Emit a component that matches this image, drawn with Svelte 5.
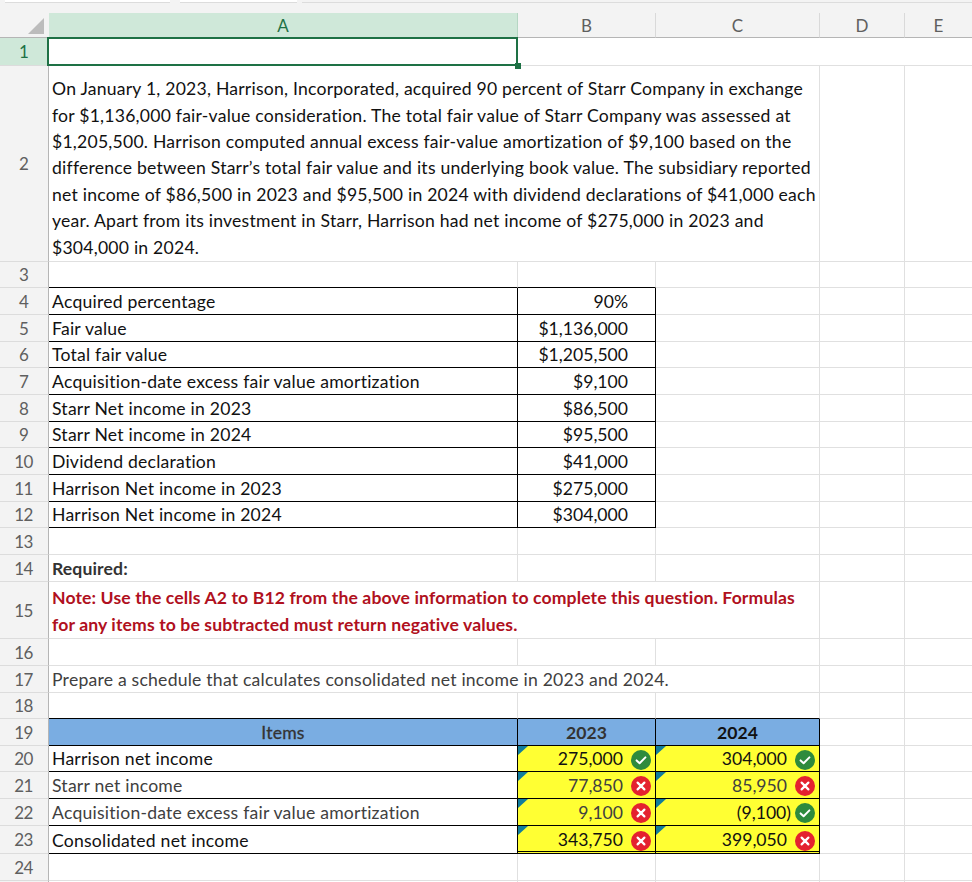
<script>
  const para = [
    'On January 1, 2023, Harrison, Incorporated, acquired 90 percent of Starr Company in exchange',
    'for $1,136,000 fair-value consideration. The total fair value of Starr Company was assessed at',
    '$1,205,500. Harrison computed annual excess fair-value amortization of $9,100 based on the',
    'difference between Starr’s total fair value and its underlying book value. The subsidiary reported',
    'net income of $86,500 in 2023 and $95,500 in 2024 with dividend declarations of $41,000 each',
    'year. Apart from its investment in Starr, Harrison had net income of $275,000 in 2023 and',
    '$304,000 in 2024.'
  ];
  const note = [
    'Note: Use the cells A2 to B12 from the above information to complete this question. Formulas',
    'for any items to be subtracted must return negative values.'
  ];
  const heights = [28,196,26,27,27,26,27,27,26,27,27,26,27,27,57,27,27,26,27,26,27,27,28,27];
  const info = {
    4:['Acquired percentage','90%'],5:['Fair value','$1,136,000'],6:['Total fair value','$1,205,500'],
    7:['Acquisition-date excess fair value amortization','$9,100'],8:['Starr Net income in 2023','$86,500'],
    9:['Starr Net income in 2024','$95,500'],10:['Dividend declaration','$41,000'],
    11:['Harrison Net income in 2023','$275,000'],12:['Harrison Net income in 2024','$304,000']
  };
  const sched = {
    20:{label:'Harrison net income',dark:true,b:['275,000',true,true],c:['304,000',true,true]},
    21:{label:'Starr net income',dark:false,b:['77,850',false,false],c:['85,950',false,false]},
    22:{label:'Acquisition-date excess fair value amortization',dark:false,b:['9,100',false,false],c:['(9,100)',true,true]},
    23:{label:'Consolidated net income',dark:true,b:['343,750',false,true],c:['399,050',false,true]}
  };
  const rowsTpl = '25px ' + heights.map(h => h + 'px').join(' ') + ' 2px';
</script>

<div class="page">
  <div class="tabs">
    <span class="tab t1"></span><span class="tab t2"></span><span class="tab t3"></span>
  </div>
  <div class="sheet" style:grid-template-rows={rowsTpl}>
    <div class="corner"><span class="tri"></span></div>
    <div class="col sel">A</div>
    <div class="col">B</div>
    <div class="col">C</div>
    <div class="col">D</div>
    <div class="col last">E</div>

    {#each heights as _, i}
      {@const n = i + 1}
      <div class="rh" class:rsel={n === 1}>{n}</div>

      {#if n === 1}
        <div class="cell a1 span3 noright"><span class="handle"></span></div>
        <div class="cell noright"></div>
        <div class="cell noright last"></div>
      {:else if n === 2}
        <div class="cell span3 txt">
          <p>{#each para as l}{l}<br />{/each}</p>
        </div>
        <div class="cell"></div>
        <div class="cell last"></div>
      {:else if n === 15}
        <div class="cell span3 txt note">
          <p>{#each note as l}{l}<br />{/each}</p>
        </div>
        <div class="cell"></div>
        <div class="cell last"></div>
      {:else if n === 17}
        <div class="cell span3 txt soft">Prepare a schedule that calculates consolidated net income in 2023 and 2024.</div>
        <div class="cell"></div>
        <div class="cell last"></div>
      {:else if info[n]}
        <div class="cell txt bk">{info[n][0]}</div>
        <div class="cell val bk">{info[n][1]}</div>
        <div class="cell"></div>
        <div class="cell"></div>
        <div class="cell last"></div>
      {:else if n === 19}
        <div class="cell head bk items">Items</div>
        <div class="cell head bk yr-soft">2023</div>
        <div class="cell head bk">2024</div>
        <div class="cell"></div>
        <div class="cell last"></div>
      {:else if sched[n]}
        {@const s = sched[n]}
        <div class="cell txt bk" class:soft={!s.dark}>{s.label}</div>
        {#each [s.b, s.c] as v}
          <div class="cell ans bk" class:dbl={n === 23} class:soft={!v[2]}>
            <span class="flag"></span>
            <span class="num" class:paren={v[0].startsWith('(')}>{v[0]}</span>
            {#if v[1]}
              <svg class="mark" viewBox="0 0 20 20"><circle cx="10" cy="10" r="10" fill="#2e8b3d"/><path d="M5.6 10.4l3 2.8 5.8-5.8" fill="none" stroke="#fff" stroke-width="2" stroke-linecap="round" stroke-linejoin="round"/></svg>
            {:else}
              <svg class="mark" viewBox="0 0 20 20"><circle cx="10" cy="10" r="10" fill="#e4222f"/><path d="M6.6 6.6l6.8 6.8M13.4 6.6l-6.8 6.8" fill="none" stroke="#fff" stroke-width="2.2" stroke-linecap="round"/></svg>
            {/if}
          </div>
        {/each}
        <div class="cell"></div>
        <div class="cell last"></div>
      {:else if n === 14}
        <div class="cell txt req">Required:</div>
        <div class="cell"></div>
        <div class="cell"></div>
        <div class="cell"></div>
        <div class="cell last"></div>
      {:else}
        <div class="cell" class:bb={n === 3 || n === 18}></div>
        <div class="cell" class:bb={n === 3 || n === 18}></div>
        <div class="cell" class:bb={n === 18}></div>
        <div class="cell"></div>
        <div class="cell last"></div>
      {/if}
    {/each}

    <div class="rh end"></div>
    <div class="cell end"></div>
    <div class="cell end"></div>
    <div class="cell end"></div>
    <div class="cell end"></div>
    <div class="cell end last"></div>
  </div>
</div>

<style>
  :global(body) { margin: 0; background: #fff; }
  .page {
    width: 972px;
    height: 882px;
    overflow: hidden;
    font-family: Lato, "Open Sans", sans-serif;
    font-size: 17.6px;
    letter-spacing: 0.22px;
    color: #111;
    background: #fff;
  }
  .tabs {
    height: 13px;
    box-sizing: border-box;
    background: #f3f3f3;
    display: flex;
    align-items: flex-start;
    padding-left: 5px;
    gap: 10px;
  }
  .tab { height: 3px; background: #fff; border-bottom: 1px solid #dcdcdc; box-sizing: border-box; }
  .t1 { width: 165px; }
  .t2 { width: 117px; }
  .t3 { flex: 1; margin-left: -5px; background: #f3f3f3; }
  .sheet {
    display: grid;
    grid-template-columns: 49px 469px 138px 164px 85px 1fr;
  }
  .corner {
    background: #f3f3f3;
    border-right: 1px solid #f3f3f3;
    border-bottom: 1px solid #b5b5b5;
    box-sizing: border-box;
    position: relative;
  }
  .tri {
    position: absolute;
    left: 28px;
    top: 5px;
    width: 16px;
    height: 16px;
    background: #bcbcbc;
    clip-path: polygon(100% 0, 100% 100%, 0 100%);
  }
  .col {
    background: #f3f3f3;
    color: #5f5f5f;
    border-right: 1px solid #d9d9d9;
    border-bottom: 1px solid #b5b5b5;
    box-sizing: border-box;
    display: flex;
    align-items: center;
    justify-content: center;
    font-size: 17px;
    letter-spacing: 0;
    padding-top: 1px;
  }
  .col.sel { background: #cfe8d9; color: #1e7145; border-bottom-color: #1e7145; border-right-color: #b5d6c3; }
  .col.last { border-right: 0; }
  .rh {
    background: #f3f3f3;
    color: #5f5f5f;
    border-right: 1px solid #b5b5b5;
    border-bottom: 1px solid #dcdcdc;
    box-sizing: border-box;
    display: flex;
    align-items: center;
    justify-content: center;
    padding-right: 1px;
    font-size: 17px;
    letter-spacing: -0.7px;
  }
  .rh.rsel { background: #cfe8d9; color: #1e7145; }
  .cell {
    border-right: 1px solid #e0e0e0;
    border-bottom: 1px solid #e0e0e0;
    box-sizing: border-box;
    min-width: 0;
    white-space: nowrap;
    position: relative;
  }
  .cell.last { border-right: 0; }
  .noright { border-right: 0; }
  .span3 { grid-column: span 3; }
  .end { border-bottom: 0; }
  .a1::before {
    content: "";
    position: absolute;
    left: -2px;
    top: -1px;
    width: 471px;
    height: 29px;
    box-sizing: border-box;
    border: 2px solid #1e7145;
  }
  .handle {
    position: absolute;
    left: 466px;
    top: 25px;
    width: 6px;
    height: 6px;
    background: #1e7145;
    z-index: 2;
  }
  .txt {
    display: flex;
    align-items: flex-end;
    padding-left: 3px;
    line-height: 24.4px;
  }
  .txt p { margin: 0; line-height: 26.4px; }
  .note { color: #b01020; font-weight: 700; letter-spacing: 0.12px; }
  .req { color: #333; font-weight: 700; letter-spacing: 0.12px; }
  .soft { color: #404040; }
  .bb { border-bottom-color: #000; }
  .bk { border-right-color: #000; border-bottom-color: #000; }
  .val {
    display: flex;
    align-items: flex-end;
    justify-content: flex-end;
    padding-right: 27px;
    line-height: 24.4px;
    letter-spacing: 0;
  }
  .head {
    background: #7aade2;
    display: flex;
    align-items: flex-end;
    justify-content: center;
    line-height: 24.4px;
    font-weight: 700;
    letter-spacing: 0;
  }
  .items { color: #333; font-weight: 400; -webkit-text-stroke: 0.3px #333; letter-spacing: 0.2px; }
  .yr-soft { color: #333; }
  .ans {
    background: #ffff33;
    display: flex;
    align-items: flex-end;
    justify-content: flex-end;
    line-height: 24.4px;
    padding-right: 4px;
    letter-spacing: 0;
  }
  .num { padding-right: 8px; }
  .num.paren { padding-right: 4px; }
  .mark { width: 20px; height: 20px; align-self: center; flex: none; margin-top: 2px; }
  .flag {
    position: absolute;
    left: 0;
    top: 0;
    width: 10px;
    height: 9px;
    background: #117d9c;
    clip-path: polygon(0 0, 100% 0, 0 100%);
  }
  .dbl { border-bottom: 3px double #000; line-height: 22.4px; padding-top: 2px; }
</style>
